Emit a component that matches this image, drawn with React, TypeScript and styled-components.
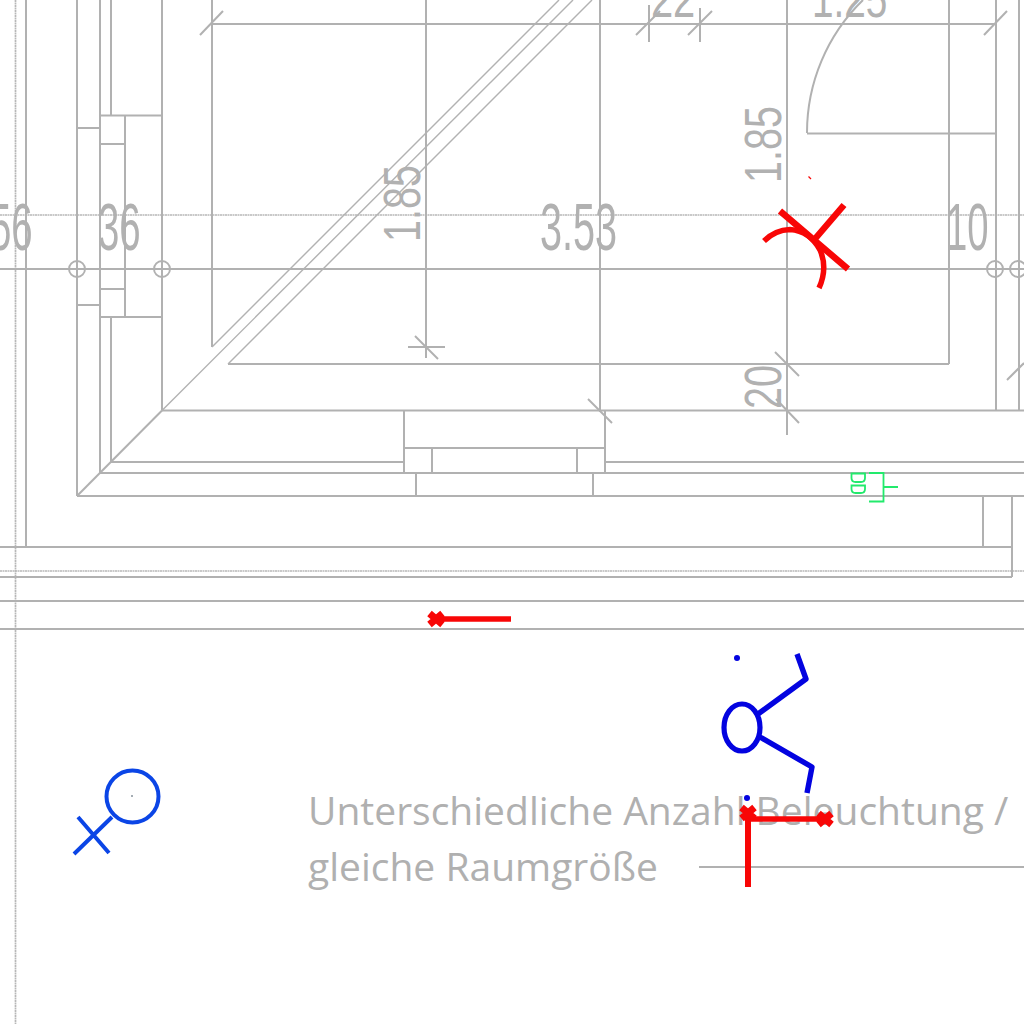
import React from "react";
import styled, { createGlobalStyle } from "styled-components";

const Global = createGlobalStyle`
  html, body { margin: 0; padding: 0; background: #fff; }
`;

const Sheet = styled.main`
  width: 1024px;
  height: 1024px;
  overflow: hidden;
  background: #fff;
`;

const Plan = styled.svg`
  display: block;
  width: 1024px;
  height: 1024px;
`;

const WallLine = styled.path`
  fill: none;
  stroke: #b1b1b1;
  stroke-width: 2;
`;

const Hairline = styled.path`
  fill: none;
  stroke: #b2b2b2;
  stroke-width: 1.4;
`;

const AxisLine = styled.path`
  fill: none;
  stroke: #b8b8b8;
  stroke-width: 1.7;
  stroke-dasharray: 2 0.5;
`;

const GridCircle = styled.circle`
  fill: none;
  stroke: #b1b1b1;
  stroke-width: 1.9;
`;

const DimText = styled.text<{ $size: number }>`
  font-family: "Liberation Sans", Arial, sans-serif;
  font-size: ${(p) => p.$size}px;
  fill: #b1b1b1;
`;

const Caption = styled.text`
  font-family: "Open Sans", "Noto Sans", sans-serif;
  font-size: 39px;
  fill: #b0b0b0;
`;

const GreenMark = styled.path`
  fill: none;
  stroke: #22ea6c;
  stroke-width: 1.8;
`;

const RedStroke = styled.path<{ $w: number }>`
  fill: none;
  stroke: #f80606;
  stroke-width: ${(p) => p.$w}px;
`;

const BlueSketch = styled.path`
  fill: none;
  stroke: #0303e0;
  stroke-width: 5.4;
  stroke-linejoin: round;
`;

const BlueRing = styled.ellipse`
  fill: none;
  stroke: #0303e0;
  stroke-width: 5.2;
`;

const BlueDot = styled.circle`
  fill: #0303e0;
`;

const RoyalStroke = styled.path`
  fill: none;
  stroke: #0b45e6;
  stroke-width: 4;
`;

const RoyalRing = styled.circle`
  fill: none;
  stroke: #0b45e6;
  stroke-width: 4;
`;

const CentreDot = styled.circle`
  fill: #334455;
`;

const walls = [
  "M26 0V547", "M77 0V496", "M100 0V473", "M111 0V115", "M111 317V462", "M162 0V410.5", "M125 115V317",
  "M212 0V347", "M426 0V358", "M600 0V412", "M787 0V435", "M949 0V364", "M996 0V410.5", "M1019 0V410.5",
  "M983 496V547", "M1012 496V577",
  "M212 24H996", "M100 115.5H162", "M77 128H100", "M100 144H125", "M0 269H1024", "M807 133.5H996",
  "M100 289H125", "M77 305H100", "M100 317H162", "M228 364H949", "M162 410.5H1024",
  "M111 462H404", "M605 462H1024", "M100 473H1024", "M77 496H1024", "M0 547H1012", "M0 577H1012",
  "M0 601H1024", "M0 629H1024", "M699 867H1024",
  "M404 410.5V473", "M605 410.5V473", "M404 448H605", "M432 448V473", "M577 448V473", "M416 473V496", "M593 473V496",
  "M77 496L162 410.5",
  "M200 35L223 11", "M984 35L1007 11", "M408 347H445", "M415 336L438 359", "M588 399L612 423",
  "M775 352L799 376", "M776 399L799 423", "M1007 380L1024 363",
  "M649 5V42", "M636 35L660 11", "M700 8V42", "M688 35L712 11",
  "M807 133A185 185 0 0 1 863 0",
];

const hairlines = ["M162 410.5L573 0", "M212 347L559 0", "M228 364L592 0"];

const axes = ["M15.5 0V1024", "M0 215H1024", "M0 571H1024"];

const gridCircles: [number, number][] = [[77, 269], [162, 269], [995, 269], [1018, 269]];

type Dim = { label: string; x: number; y: number; size: number; sx: number; vertical?: boolean };

const dims: Dim[] = [
  { label: "56", x: -10, y: 249.5, size: 66, sx: 0.58 },
  { label: "36", x: 98, y: 249.5, size: 66, sx: 0.58 },
  { label: "3.53", x: 540, y: 249.5, size: 66, sx: 0.6 },
  { label: "10", x: 946, y: 249.5, size: 66, sx: 0.58 },
  { label: "22", x: 651, y: 17, size: 51, sx: 0.78 },
  { label: "1.25", x: 812, y: 17, size: 51, sx: 0.76 },
  { label: "1.85", x: 420, y: 242, size: 52, sx: 0.76, vertical: true },
  { label: "1.85", x: 781, y: 183, size: 52, sx: 0.76, vertical: true },
  { label: "20", x: 781, y: 409, size: 52, sx: 0.76, vertical: true },
];

const crossAt = (x: number, y: number) => `M${x - 6.5} ${y - 5.5}L${x + 6.5} ${y + 5.5}M${x - 6.5} ${y + 5.5}L${x + 6.5} ${y - 5.5}`;

export default function App() {
  return (
    <>
      <Global />
      <Sheet>
        <Plan viewBox="0 0 1024 1024">
          {axes.map((d) => <AxisLine key={d} d={d} />)}
          {walls.map((d) => <WallLine key={d} d={d} />)}
          {hairlines.map((d) => <Hairline key={d} d={d} />)}
          {gridCircles.map(([x, y]) => <GridCircle key={x} cx={x} cy={y} r={8} />)}
          {dims.map((t) => (
            <DimText
              key={t.label + t.x}
              $size={t.size}
              transform={`translate(${t.x} ${t.y})${t.vertical ? " rotate(-90)" : ""} scale(${t.sx} 1)`}
            >
              {t.label}
            </DimText>
          ))}

          <GreenMark d="M869 473H883.5V501.5H869M883.5 487H898" />
          <GreenMark d="M851.5 473.5H865V478Q865 482 861 482H855.5Q851.5 482 851.5 478Z" />
          <GreenMark d="M851.5 485.5H865V489Q865 493 861 493H855.5Q851.5 493 851.5 489Z" />

          <Caption x={308} y={825}>Unterschiedliche Anzahl Beleuchtung /</Caption>
          <Caption x={308} y={881}>gleiche Raumgröße</Caption>

          <RedStroke $w={6.5} d="M780 211L848 269M844 205L814 240" />
          <RedStroke $w={5.5} d="M764 241Q775 230 790 229.5Q810 231 820 250Q828 268 819 288" />
          <RedStroke $w={1.3} d="M808.5 176.5L811 179" />
          <RedStroke $w={5.5} d="M436 619H511" />
          <RedStroke $w={7} d={crossAt(436, 619)} />

          <BlueSketch d="M758 714L806 679L797 654" />
          <BlueSketch d="M760 737L812 767L807 793" />
          <BlueRing cx={742} cy={727.5} rx={18} ry={23.5} />
          <BlueDot cx={737} cy={658} r={3} />
          <BlueDot cx={747} cy={798} r={3} />

          <RedStroke $w={6} d="M748 813V887" />
          <RedStroke $w={5.5} d="M748 819H825" />
          <RedStroke $w={7} d={crossAt(748, 813)} />
          <RedStroke $w={7} d={crossAt(825, 819)} />

          <RoyalRing cx={132.5} cy={796.5} r={26} />
          <CentreDot cx={132} cy={796} r={0.8} />
          <RoyalStroke d="M112 817L74 854M78 817L109 853" />
        </Plan>
      </Sheet>
    </>
  );
}
